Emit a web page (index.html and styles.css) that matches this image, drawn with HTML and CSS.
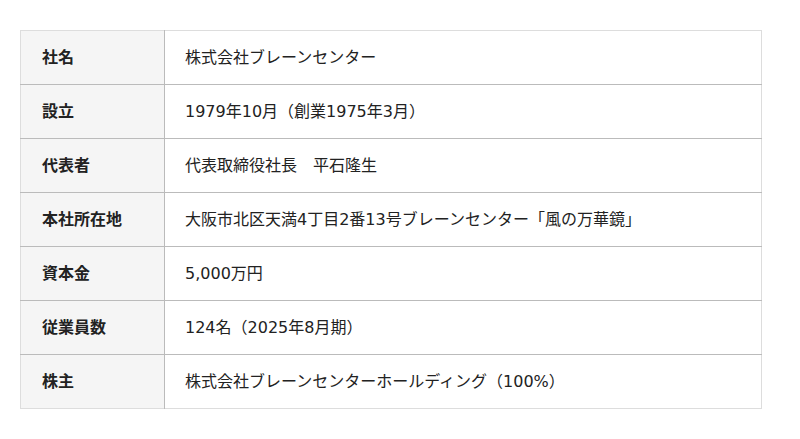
FILE: index.html
```html
<!DOCTYPE html>
<html lang="ja">
<head>
<meta charset="utf-8">
<link rel="stylesheet" href="styles.css">
</head>
<body>
<div class="page">
<table class="info">
<tbody>
<tr><th>社名</th><td>株式会社ブレーンセンター</td></tr>
<tr><th>設立</th><td>1979年10月（創業1975年3月）</td></tr>
<tr><th>代表者</th><td>代表取締役社長　平石隆生</td></tr>
<tr><th>本社所在地</th><td>大阪市北区天満4丁目2番13号ブレーンセンター「風の万華鏡」</td></tr>
<tr><th>資本金</th><td>5,000万円</td></tr>
<tr><th>従業員数</th><td>124名（2025年8月期）</td></tr>
<tr><th>株主</th><td>株式会社ブレーンセンターホールディング（100%）</td></tr>
</tbody>
</table>
</div>
</body>
</html>
```
FILE: styles.css
```css
html, body {
  margin: 0;
  padding: 0;
  background: #fff;
}
.page {
  padding: 30px 38px 0 20px;
  font-family: "DejaVu Sans", "Noto Sans CJK JP", sans-serif;
  color: #222;
}
.info {
  width: 742px;
  border-collapse: collapse;
  border: 1px solid #ddd;
  font-size: 16px;
}
.info th, .info td {
  height: 54px;
  text-align: left;
  vertical-align: middle;
  box-sizing: border-box;
}
.info tr + tr th, .info tr + tr td {
  border-top: 1px solid #bbb;
}
.info th {
  width: 144px;
  padding: 0 0 3px 21px;
  background: #f5f5f5;
  font-weight: bold;
  border-right: 1px solid #bbb;
  font-family: "Noto Sans CJK JP", sans-serif;
}
.info td {
  padding: 0 0 3px 20px;
  font-weight: normal;
}
```
